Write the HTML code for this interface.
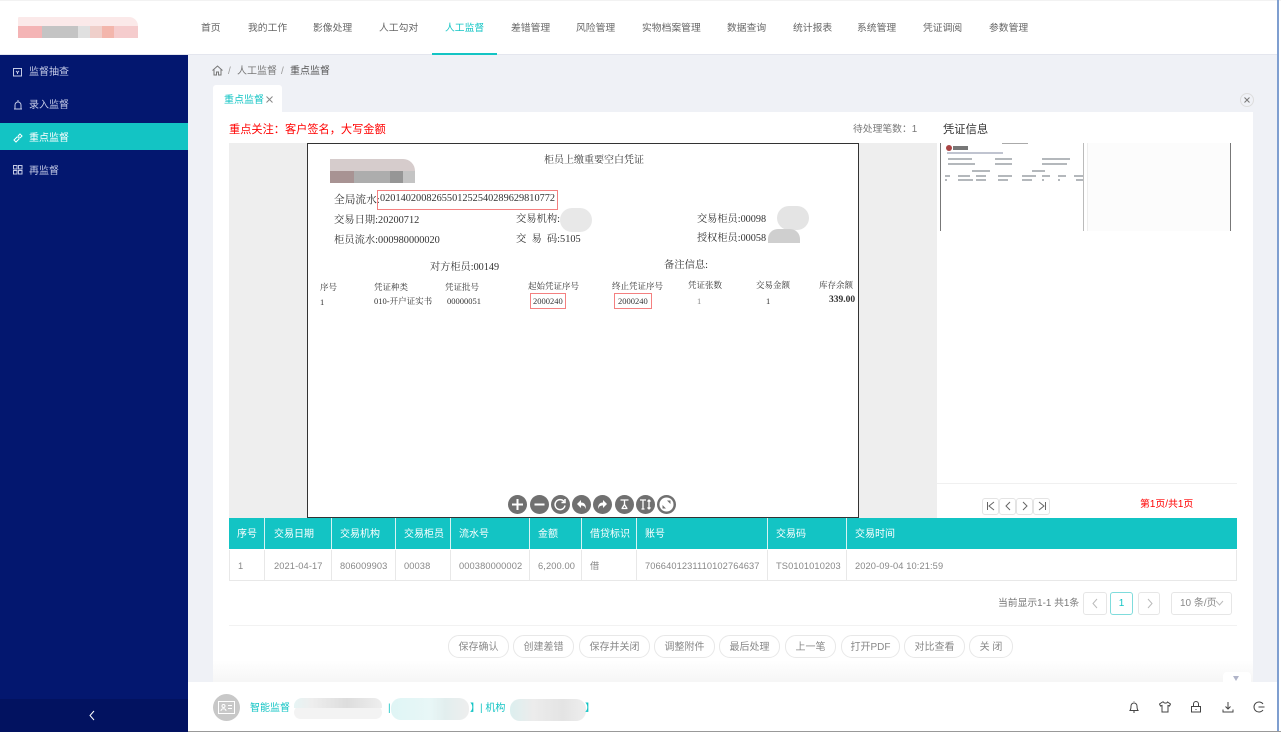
<!DOCTYPE html>
<html><head><meta charset="utf-8"><style>
html,body{margin:0;padding:0;width:1281px;height:732px;overflow:hidden;background:#fff}
body{position:relative;font-family:"Liberation Sans","Noto Sans CJK SC",sans-serif;font-size:10px;color:#666}
.a,.t,.d{position:absolute}
.t,.d{white-space:nowrap;line-height:14px}
.d{font-family:"Liberation Serif","Noto Serif CJK SC",serif;color:#333;filter:blur(.25px)}
.nav{top:22px;font-size:9.800px;color:#666}
.side{left:29px;color:#c5cbe6;font-size:10px}
.b{position:absolute;top:635px;height:21px;border:1px solid #e8e8e8;border-radius:11px;line-height:23px;text-align:center;color:#888;background:#fff;box-sizing:content-box}
.th{position:absolute;top:518px;height:31px;line-height:33px;color:#fff;background:#13c4c4;border-right:1px solid #d6f3f3;box-sizing:border-box;padding-left:9px;white-space:nowrap}
.td{position:absolute;top:550px;height:31px;line-height:32px;color:#888;font-size:9.300px;letter-spacing:.1px;background:#fff;border-right:1px solid #e8e8e8;border-bottom:1px solid #e8e8e8;box-sizing:border-box;padding-left:9px;white-space:nowrap}
.pg{position:absolute;top:498px;width:15px;height:15px;border:1px solid #e4e4e4;border-radius:3px;background:#fff}
.pg svg{position:absolute;left:2px;top:1px}
.tb{position:absolute;top:495px;width:19px;height:19px;border-radius:50%;background:#707070}
.tb svg{position:absolute;left:0;top:0}
.box{position:absolute;border:1px solid #f48080}
.ic{position:absolute;fill:none;stroke:#c5cbe6;stroke-width:1}
.bi{position:absolute;fill:none;stroke:#444;stroke-width:1}
.blk{position:absolute}
.l{position:absolute;height:2px;background:#b4b8bc}
</style></head><body>
<!-- backgrounds -->
<div class="a" style="left:0;top:0;width:1281px;height:1px;background:#f2f2f2"></div>
<div class="a" style="left:188px;top:55px;width:1089px;height:627px;background:#eff1f6"></div>
<div class="a" style="left:1277px;top:0;width:2px;height:732px;background:#7f9fd0"></div>
<div class="a" style="left:0;top:54px;width:1277px;height:1px;background:#e4e6ee"></div>
<!-- logo -->
<div class="a" style="left:18px;top:17px;width:120px;height:9px;background:#fbe9e9;border-radius:6px 40px 0 0"></div>
<div class="blk" style="left:18px;top:26px;width:24px;height:12px;background:#f4b4b5"></div>
<div class="blk" style="left:42px;top:26px;width:36px;height:12px;background:#c4c4c4"></div>
<div class="blk" style="left:78px;top:26px;width:12px;height:12px;background:#e0e0e0"></div>
<div class="blk" style="left:90px;top:26px;width:12px;height:12px;background:#efcfca"></div>
<div class="blk" style="left:102px;top:26px;width:12px;height:12px;background:#f3b6ac"></div>
<div class="blk" style="left:114px;top:26px;width:24px;height:12px;background:#f5cccd"></div>
<!-- nav -->
<span class="t nav" style="left:201px">首页</span>
<span class="t nav" style="left:248px">我的工作</span>
<span class="t nav" style="left:313px">影像处理</span>
<span class="t nav" style="left:379px">人工勾对</span>
<span class="t nav" style="left:445px;color:#13c4c4">人工监督</span>
<span class="t nav" style="left:511px">差错管理</span>
<span class="t nav" style="left:576px">风险管理</span>
<span class="t nav" style="left:642px">实物档案管理</span>
<span class="t nav" style="left:727px">数据查询</span>
<span class="t nav" style="left:793px">统计报表</span>
<span class="t nav" style="left:857px">系统管理</span>
<span class="t nav" style="left:923px">凭证调阅</span>
<span class="t nav" style="left:989px">参数管理</span>
<div class="a" style="left:432px;top:53px;width:65px;height:2px;background:#13c4c4"></div>
<!-- sidebar -->
<div class="a" style="left:0;top:55px;width:188px;height:644px;background:#03176f"></div>
<div class="a" style="left:0;top:123px;width:188px;height:27px;background:#13c4c4"></div>
<svg class="ic" style="left:13px;top:67px" width="10" height="10"><rect x=".5" y="1.5" width="8" height="7.5"/><path d="M3 4l1.500 1.500L6 4M4.500 5.500V7"/></svg>
<span class="t side" style="top:66px">监督抽查</span>
<svg class="ic" style="left:13px;top:100px" width="10" height="10"><path d="M1 9h8M2 9V5a3 3 0 0 1 6 0v4M5 0v1.500"/></svg>
<span class="t side" style="top:99px">录入监督</span>
<svg class="ic" style="left:13px;top:133px;stroke:#fff" width="10" height="10"><path d="M1 7l3-3 2 0 0 2-3 3zM5 3l2-2 2 2-2 2"/></svg>
<span class="t side" style="top:132px;color:#fff">重点监督</span>
<svg class="ic" style="left:13px;top:165px" width="10" height="10"><rect x=".5" y=".5" width="3.500" height="3.500"/><rect x="5.500" y=".5" width="3.500" height="3.500"/><rect x=".5" y="5.500" width="3.500" height="3.500"/><rect x="5.500" y="5.500" width="3.500" height="3.500"/></svg>
<span class="t side" style="top:165px">再监督</span>
<!-- breadcrumb -->
<svg class="a" style="left:212px;top:65px" width="11" height="11" fill="none" stroke="#777"><path d="M.5 5.500L5.500 1l5 4.500M2 4.500V10h2.500V7h2v3H9V4.500"/></svg>
<span class="t" style="left:228px;top:65px;color:#999">/</span>
<span class="t" style="left:237px;top:65px;color:#777">人工监督</span>
<span class="t" style="left:281px;top:65px;color:#999">/</span>
<span class="t" style="left:290px;top:65px;color:#555">重点监督</span>
<!-- tab -->
<div class="a" style="left:213px;top:85px;width:69px;height:27px;background:#fff;border-radius:3px 3px 0 0"></div>
<span class="t" style="left:224px;top:94px;color:#13c4c4">重点监督</span>
<svg class="a" style="left:266px;top:96px" width="7" height="7" fill="none" stroke="#888"><path d="M.5.5l6 6M6.500.5l-6 6"/></svg>
<svg class="a" style="left:1240px;top:93px" width="14" height="14" fill="none" stroke="#777"><circle cx="7" cy="7" r="6.500" stroke="#ddd"/><path d="M4.500 4.500l5 5M9.500 4.500l-5 5"/></svg>
<!-- panel -->
<div class="a" style="left:213px;top:112px;width:1040px;height:570px;background:#fff"></div>
<span class="t" style="left:229px;top:123px;color:#f00;font-size:11.200px">重点关注：客户签名，大写金额</span>
<span class="t" style="left:853px;top:123px;color:#777;font-size:9.800px">待处理笔数：1</span>
<span class="t" style="left:943px;top:123px;color:#333;font-size:11.300px">凭证信息</span>
<!-- image viewer -->
<div class="a" style="left:229px;top:143px;width:708px;height:375px;background:#eee"></div>
<div class="a" style="left:307px;top:143px;width:552px;height:375px;background:#fff;border:1px solid #333;box-sizing:border-box"></div>
<!-- doc blur -->
<div class="blk" style="left:330px;top:159px;width:85px;height:12px;background:#d6cccc;border-radius:0 20px 0 0"></div>
<div class="blk" style="left:330px;top:171px;width:24px;height:12px;background:#a89393"></div>
<div class="blk" style="left:354px;top:171px;width:36px;height:12px;background:#adadad"></div>
<div class="blk" style="left:390px;top:171px;width:13px;height:12px;background:#969696"></div>
<div class="blk" style="left:403px;top:171px;width:12px;height:12px;background:#c4c4c4"></div>
<div class="blk" style="left:560px;top:208px;width:32px;height:24px;background:#e8e8e8;border-radius:12px"></div>
<div class="blk" style="left:777px;top:206px;width:32px;height:24px;background:#e4e4e4;border-radius:12px"></div>
<div class="blk" style="left:768px;top:229px;width:32px;height:14px;background:#cfcfcf;border-radius:10px 10px 0 0"></div>
<span class="d" style="left:544px;top:154px;font-size:10px">柜员上缴重要空白凭证</span>
<span class="d" style="left:334px;top:193px;font-size:10.700px">全局流水:</span>
<div class="box" style="left:377px;top:190px;width:179px;height:18px"></div>
<span class="d" style="left:380px;top:192px;font-size:10.300px">0201402008265501252540289629810772</span>
<span class="d" style="left:334px;top:214px;font-size:10.300px">交易日期:20200712</span>
<span class="d" style="left:516px;top:213px;font-size:10.300px">交易机构:</span>
<span class="d" style="left:697px;top:213px;font-size:10.200px">交易柜员:00098</span>
<span class="d" style="left:334px;top:234px;font-size:10.300px">柜员流水:000980000020</span>
<span class="d" style="left:516px;top:233px;font-size:10.300px">交&nbsp;&nbsp;易&nbsp;&nbsp;码:5105</span>
<span class="d" style="left:697px;top:232px;font-size:10.200px">授权柜员:00058</span>
<span class="d" style="left:430px;top:261px;font-size:10.200px">对方柜员:00149</span>
<span class="d" style="left:664px;top:259px;font-size:10.300px">备注信息:</span>
<span class="d" style="left:320px;top:280px;font-size:8.500px">序号</span>
<span class="d" style="left:374px;top:280px;font-size:8.500px">凭证种类</span>
<span class="d" style="left:445px;top:280px;font-size:8.500px">凭证批号</span>
<span class="d" style="left:528px;top:279px;font-size:8.500px">起始凭证序号</span>
<span class="d" style="left:612px;top:279px;font-size:8.500px">终止凭证序号</span>
<span class="d" style="left:688px;top:278px;font-size:8.500px">凭证张数</span>
<span class="d" style="left:756px;top:278px;font-size:8.500px">交易金额</span>
<span class="d" style="left:819px;top:278px;font-size:8.500px">库存余额</span>
<span class="d" style="left:320px;top:295px;font-size:8.500px">1</span>
<span class="d" style="left:374px;top:294px;font-size:8.500px">010-开户证实书</span>
<span class="d" style="left:447px;top:294px;font-size:8.500px">00000051</span>
<div class="box" style="left:530px;top:293px;width:34px;height:14px"></div>
<span class="d" style="left:533px;top:294px;font-size:8.500px">2000240</span>
<div class="box" style="left:614px;top:293px;width:36px;height:14px"></div>
<span class="d" style="left:618px;top:294px;font-size:8.500px">2000240</span>
<span class="d" style="left:697px;top:294px;font-size:8.500px;color:#888">1</span>
<span class="d" style="left:766px;top:294px;font-size:8.500px">1</span>
<span class="d" style="left:829px;top:293px;font-size:9.500px;font-weight:bold">339.00</span>
<!-- viewer toolbar -->
<div class="tb" style="left:508px"><svg width="19" height="19" fill="none" stroke="#fff" stroke-width="2"><path d="M4 9.500h11M9.500 4v11"/></svg></div>
<div class="tb" style="left:530px"><svg width="19" height="19" fill="none" stroke="#fff" stroke-width="2"><path d="M4.500 9.500h10"/></svg></div>
<div class="tb" style="left:551px"><svg width="19" height="19" fill="none" stroke="#fff" stroke-width="1.500"><path d="M13 6.500a5 5 0 1 0 1 4M14 4v3.500h-3.500"/></svg></div>
<div class="tb" style="left:572px"><svg width="19" height="19" fill="#fff"><path d="M5 9l4-4v2.500c4 0 5 3 5 6.500-1-2.500-2-3.500-5-3.500V13z"/></svg></div>
<div class="tb" style="left:593px"><svg width="19" height="19" fill="#fff"><path d="M14 9l-4-4v2.500c-4 0-5 3-5 6.500 1-2.500 2-3.500 5-3.500V13z"/></svg></div>
<div class="tb" style="left:615px"><svg width="19" height="19" fill="none" stroke="#fff" stroke-width="1.300"><path d="M5.500 5h8M9.500 5v5M6.500 13.500h6M7 13.500l2.500-4 2.500 4"/></svg></div>
<div class="tb" style="left:636px"><svg width="19" height="19" fill="none" stroke="#fff" stroke-width="1.300"><path d="M4 5h6M7 5v9M5.500 14h3M13 5v9M11.500 6.500L13 5l1.500 1.500M11.500 12.500L13 14l1.500-1.500"/></svg></div>
<div class="tb" style="left:657px"><svg width="19" height="19"><circle cx="9.500" cy="9.500" r="7" fill="#fff"/><path d="M10 5.500h3.500V9zM9 13.500H5.500V10z" fill="#707070"/></svg></div>
<!-- thumbnails -->
<div class="a" style="left:940px;top:143px;width:144px;height:88px;background:#fff;border-left:1px solid #777;border-right:1px solid #bbb;box-sizing:border-box"></div>
<div class="a" style="left:946px;top:145px;width:6px;height:6px;border-radius:50%;background:#a44"></div>
<div class="l" style="left:953px;top:146px;width:15px;height:4px;background:#777"></div>
<div class="l" style="left:1002px;top:143px;width:26px;height:1px;background:#aaa"></div>
<div class="l" style="left:947px;top:152px;width:56px;background:#c0c4d0"></div>
<div class="l" style="left:948px;top:158px;width:24px"></div><div class="l" style="left:995px;top:158px;width:17px"></div><div class="l" style="left:1042px;top:158px;width:28px"></div>
<div class="l" style="left:948px;top:163px;width:27px"></div><div class="l" style="left:995px;top:163px;width:17px"></div><div class="l" style="left:1042px;top:163px;width:25px"></div>
<div class="l" style="left:972px;top:170px;width:18px"></div><div class="l" style="left:1032px;top:170px;width:13px"></div>
<div class="l" style="left:945px;top:175px;width:5px"></div><div class="l" style="left:958px;top:175px;width:12px"></div><div class="l" style="left:976px;top:175px;width:10px"></div><div class="l" style="left:998px;top:175px;width:14px"></div><div class="l" style="left:1022px;top:175px;width:14px"></div><div class="l" style="left:1042px;top:175px;width:8px"></div><div class="l" style="left:1058px;top:175px;width:8px"></div><div class="l" style="left:1074px;top:175px;width:9px"></div>
<div class="l" style="left:945px;top:179px;width:2px"></div><div class="l" style="left:958px;top:179px;width:15px"></div><div class="l" style="left:976px;top:179px;width:10px"></div><div class="l" style="left:998px;top:179px;width:10px"></div><div class="l" style="left:1022px;top:179px;width:10px"></div><div class="l" style="left:1042px;top:179px;width:2px"></div><div class="l" style="left:1058px;top:179px;width:2px"></div><div class="l" style="left:1076px;top:179px;width:7px"></div>
<div class="a" style="left:1087px;top:143px;width:144px;height:88px;background:#fcfcfc;border-right:1px solid #777;border-left:1px solid #eee;box-sizing:border-box"></div>
<div class="a" style="left:937px;top:483px;width:300px;height:1px;background:#f0f0f0"></div>
<div class="pg" style="left:982px"><svg width="12" height="12" fill="none" stroke="#666"><path d="M2.500 2v8M9 2L4 6l5 4"/></svg></div>
<div class="pg" style="left:999px"><svg width="12" height="12" fill="none" stroke="#666"><path d="M8 2L4 6l4 4"/></svg></div>
<div class="pg" style="left:1016px"><svg width="12" height="12" fill="none" stroke="#666"><path d="M4 2l4 4-4 4"/></svg></div>
<div class="pg" style="left:1033px"><svg width="12" height="12" fill="none" stroke="#666"><path d="M9.500 2v8M3 2l5 4-5 4"/></svg></div>
<span class="t" style="left:1140px;top:498px;color:#f00;font-size:9.900px">第1页/共1页</span>
<!-- table -->
<div class="th" style="left:229px;width:36px;padding-left:8px">序号</div>
<div class="th" style="left:265px;width:67px">交易日期</div>
<div class="th" style="left:332px;width:64px;padding-left:8px">交易机构</div>
<div class="th" style="left:396px;width:55px;padding-left:8px">交易柜员</div>
<div class="th" style="left:451px;width:79px;padding-left:8px">流水号</div>
<div class="th" style="left:530px;width:52px;padding-left:8px">金额</div>
<div class="th" style="left:582px;width:55px;padding-left:8px">借贷标识</div>
<div class="th" style="left:637px;width:131px;padding-left:8px">账号</div>
<div class="th" style="left:768px;width:79px;padding-left:8px">交易码</div>
<div class="th" style="left:847px;width:390px;border-right:0;padding-left:8px">交易时间</div>
<div class="td" style="left:229px;width:36px;border-left:1px solid #e8e8e8;padding-left:8px">1</div>
<div class="td" style="left:265px;width:67px">2021-04-17</div>
<div class="td" style="left:332px;width:64px;padding-left:8px">806009903</div>
<div class="td" style="left:396px;width:55px;padding-left:8px">00038</div>
<div class="td" style="left:451px;width:79px;padding-left:8px">000380000002</div>
<div class="td" style="left:530px;width:52px;padding-left:8px">6,200.00</div>
<div class="td" style="left:582px;width:55px;padding-left:8px">借</div>
<div class="td" style="left:637px;width:131px;padding-left:8px">7066401231110102764637</div>
<div class="td" style="left:768px;width:79px;padding-left:8px">TS0101010203</div>
<div class="td" style="left:847px;width:390px;padding-left:8px">2020-09-04 10:21:59</div>
<!-- pagination -->
<span class="t" style="left:998px;top:597px;color:#777;font-size:9.800px">当前显示1-1 共1条</span>
<div class="a" style="left:1083px;top:592px;width:22px;height:21px;border:1px solid #e6e6e6;border-radius:3px"><svg class="a" style="left:6px;top:5px" width="10" height="11" fill="none" stroke="#bbb"><path d="M7 1L3 5.500 7 10"/></svg></div>
<div class="a" style="left:1110px;top:592px;width:21px;height:21px;border:1px solid #7fdcdc;border-radius:3px;color:#13c4c4;text-align:center;line-height:21px">1</div>
<div class="a" style="left:1138px;top:592px;width:20px;height:21px;border:1px solid #e6e6e6;border-radius:3px"><svg class="a" style="left:6px;top:5px" width="10" height="11" fill="none" stroke="#bbb"><path d="M3 1l4 4.500L3 10"/></svg></div>
<div class="a" style="left:1171px;top:592px;height:21px;border:1px solid #e6e6e6;border-radius:3px;line-height:21px;color:#888;padding-left:8px;box-sizing:content-box;width:51px;white-space:nowrap">10 条/页</div>
<svg class="a" style="left:1215px;top:600px" width="9" height="7" fill="none" stroke="#bbb"><path d="M1 1l3.500 4L8 1"/></svg>
<div class="a" style="left:229px;top:625px;width:1008px;height:1px;background:#f2f2f2"></div>
<!-- buttons -->
<div class="b" style="left:448px;width:59px">保存确认</div>
<div class="b" style="left:513px;width:59px">创建差错</div>
<div class="b" style="left:579px;width:69px">保存并关闭</div>
<div class="b" style="left:654px;width:59px">调整附件</div>
<div class="b" style="left:719px;width:59px">最后处理</div>
<div class="b" style="left:785px;width:49px">上一笔</div>
<div class="b" style="left:841px;width:57px">打开PDF</div>
<div class="b" style="left:904px;width:59px">对比查看</div>
<div class="b" style="left:969px;width:42px">关 闭</div>
<!-- footer -->
<div class="a" style="left:213px;top:660px;width:1040px;height:22px;background:linear-gradient(#fff,#f6f6f6)"></div>
<div class="a" style="left:188px;top:682px;width:1089px;height:49px;background:#fff"></div>
<div class="a" style="left:0;top:731px;width:1281px;height:1px;background:#999"></div>
<div class="a" style="left:0;top:699px;width:188px;height:33px;background:#021260"></div>
<svg class="a" style="left:88px;top:710px" width="8" height="11" fill="none" stroke="#fff"><path d="M6 1L2 5.500 6 10"/></svg>
<div class="a" style="left:1223px;top:672px;width:28px;height:10px;background:#fff;border-radius:4px 4px 0 0"></div>
<div class="a" style="left:1233px;top:676px;border:3.500px solid transparent;border-top:5px solid #b0b4c8;border-bottom:0"></div>
<div class="a" style="left:213px;top:694px;width:27px;height:27px;border-radius:50%;background:#c8c8c8"></div>
<svg class="a" style="left:218px;top:701px" width="17" height="13" fill="none" stroke="#fff"><rect x=".5" y=".5" width="16" height="12"/><circle cx="5.500" cy="5" r="1.500"/><path d="M3 10c0-3 5-3 5 0M10 4.500h4M10 7.500h4"/></svg>
<span class="t" style="left:250px;top:702px;color:#13c4c4">智能监督</span>
<div class="blk" style="left:294px;top:706px;width:88px;height:13px;background:#f3f3f3;border-radius:8px"></div>
<div class="blk" style="left:294px;top:698px;width:88px;height:10px;background:linear-gradient(90deg,#e6f4f4,#eee 20%,#ddd 60%,#eee);border-radius:8px 8px 0 0"></div>
<span class="t" style="left:388px;top:702px;color:#13c4c4">|</span>
<div class="blk" style="left:391px;top:698px;width:78px;height:22px;background:linear-gradient(90deg,#dff5f5,#e8f7f7 50%,#e2eeee 70%,#eee);border-radius:10px"></div>
<span class="t" style="left:470px;top:702px;color:#13c4c4">】| 机构 【</span>
<div class="blk" style="left:510px;top:699px;width:76px;height:22px;background:linear-gradient(90deg,#dcefef,#ececec 30%,#e4e4e4 70%,#eee);border-radius:10px"></div>
<span class="t" style="left:585px;top:702px;color:#13c4c4">】</span>
<svg class="bi" style="left:1128px;top:701px" width="12" height="12"><path d="M2 9.500C3 8 3 6.500 3 5a3 3 0 0 1 6 0c0 1.500 0 3 1 4.500zM5 11h2M6 1V.5"/></svg>
<svg class="bi" style="left:1159px;top:701px" width="12" height="12"><path d="M3.500 1L.5 3l1 2 1.500-.5V11h6V4.500l1.500.5 1-2-3-2c-.5 1.500-3.500 1.500-4 0z"/></svg>
<svg class="bi" style="left:1190px;top:701px" width="12" height="12"><rect x="1.500" y="5.500" width="9" height="5.500"/><path d="M3.500 5.500V3a2.500 2.500 0 0 1 5 0v2.500M5.500 8.500h1"/></svg>
<svg class="bi" style="left:1222px;top:701px" width="12" height="12"><path d="M6 1v7M3.500 5.500L6 8l2.500-2.500M1 8.500v2.500h10V8.500"/></svg>
<svg class="bi" style="left:1253px;top:701px" width="12" height="12"><path d="M10 3a5 5 0 1 0 0 6M5.500 6h6"/></svg>
</body></html>
